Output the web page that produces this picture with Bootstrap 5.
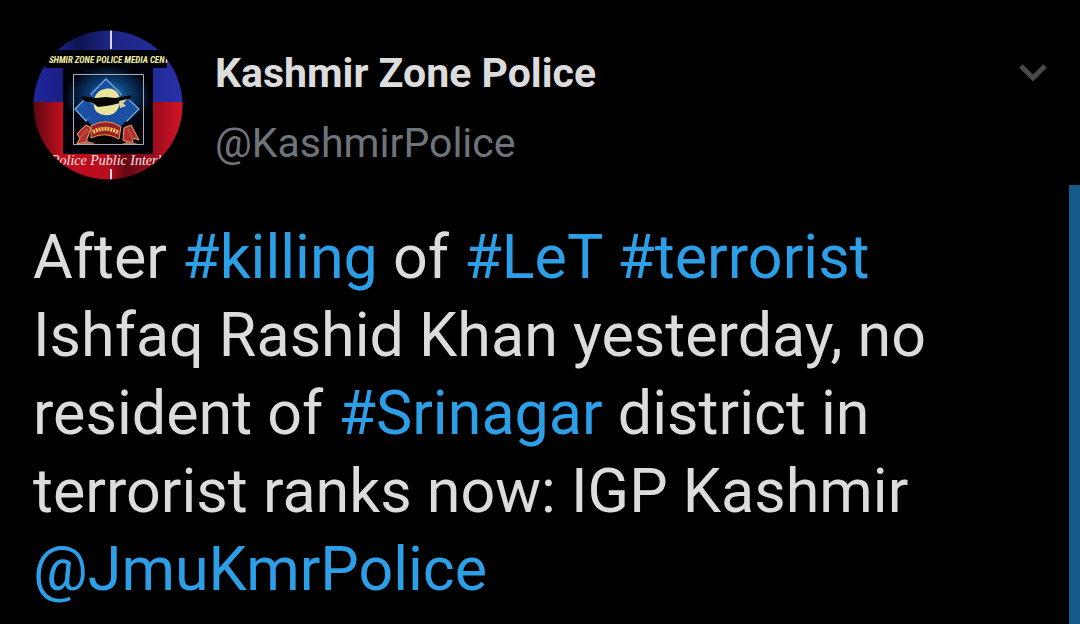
<!DOCTYPE html>
<html lang="en" data-bs-theme="dark">
<head>
<meta charset="utf-8">
<meta name="viewport" content="width=device-width, initial-scale=1">
<title>Kashmir Zone Police</title>
<link href="https://cdn.jsdelivr.net/npm/bootstrap@5.3.0/dist/css/bootstrap.min.css" rel="stylesheet">
<style>
  body { background: #000; color: #dcdcdc; font-family: Roboto, "Liberation Sans", sans-serif; }
  .post { padding: 30px 30px 16px 33px; }
  .avatar { width: 150px; height: 150px; }
  .author { margin-left: 32px; }
  .author h1, .author .handle { font-size: 41px; line-height: 70px; }
  .author h1, .author h1 a { color: #dcdcdc; }
  .author .handle { color: #6e7479; }
  .more { margin-top: 25px; color: #48484a; }
  .message { font-size: 61px; line-height: 78px; margin-top: 38px; }
  .message a { color: #2c9fe6; }
  .scroll-thumb { top: 185px; width: 11px; background: #145a88; }
</style>
</head>
<body>
<main class="position-relative min-vh-100">
  <article class="post">
    <header class="d-flex align-items-start">
      <svg class="avatar flex-shrink-0" viewBox="0 0 150 150" role="img" aria-label="Kashmir Zone Police emblem">
        <defs>
          <clipPath id="disc"><circle cx="75" cy="75" r="74.500"/></clipPath>
          <linearGradient id="sky" x1="0" x2="1"><stop offset="0" stop-color="#20259c"/><stop offset=".18" stop-color="#1b2088"/><stop offset=".3" stop-color="#0e1450"/><stop offset=".5" stop-color="#1b2580"/><stop offset="1" stop-color="#2730a8"/></linearGradient>
          <linearGradient id="ground" x1="0" x2="1"><stop offset="0" stop-color="#5b0610"/><stop offset=".2" stop-color="#c3101f"/><stop offset=".5" stop-color="#b90c1c"/><stop offset=".62" stop-color="#650812"/><stop offset="1" stop-color="#d41427"/></linearGradient>
          <radialGradient id="glow" cx=".5" cy=".4" r=".6"><stop offset="0" stop-color="#2f8cc8"/><stop offset=".5" stop-color="#0b3a70"/><stop offset="1" stop-color="#020512"/></radialGradient>
          <radialGradient id="halo"><stop offset=".5" stop-color="#0d3f85"/><stop offset="1" stop-color="#02030a"/></radialGradient>
        </defs>
        <g clip-path="url(#disc)">
          <path fill="url(#sky)" d="M0 0h150v72H0z"/>
          <path fill="url(#ground)" d="M0 72h150v78H0z"/>
          <path fill="#02030a" d="M12 20h122v18H12zM30 37h90v87H30z"/>
          <path fill="none" stroke="#d5d6ef" stroke-width="2" d="M78 0v19M78 139v11"/>
          <ellipse cx="75" cy="67" rx="43" ry="31" fill="url(#halo)"/>
          <path fill="url(#glow)" d="M42 45h68v51H42z"/>
          <path fill="#080405" d="M42 95h68v19H42z"/>
          <path fill="none" stroke="#a9adb0" d="M40.500 44.500h70v70h-70z"/>
          <path fill="#1a4fa4" stroke="#76aadc" stroke-width="1.300" d="M73 49l15 15-15 16-15-16zM53 68l12 11-12 12-11-12zM94 68l12 11-12 12-11-12z"/>
          <path fill="#1a4fa4" d="M59 64h28v16l7 10-7 7H60l-6-7 6-10z"/>
          <path fill="#e9e59b" d="M72 59c9-2 16 4 15 14-2 10-9 13-15 12-10-1-12-7-11-15 1-6 5-10 11-11z"/>
          <path fill="#060605" d="M48 66l15 2 10-1 9 1 17-3-2 4-10 4-8 2-6 1-8 1-5-4-9-2z"/>
          <path fill="#d8d2a0" d="M86 71l9-2-5 4 3 3-6 2z"/>
          <path fill="#95202a" stroke="#f09a42" d="M58 96q15-9 30 1l-2 12q-14-8-28-1z"/>
          <path fill="#b92b2d" stroke="#dbae75" d="M44 104l9-9 5 3-5 14-9 2 3-6zM91 98l7-3 8 15-6-2-1 6-9-4z"/>
          <path fill="none" stroke="#ffcc52" stroke-width="4" stroke-dasharray="2 1" d="M60 102q13-7 26 1"/>
          <path fill="none" stroke="#ac543b" stroke-width="2" d="M47 108l8-9M95 99l5 11"/>
          <path fill="#ac755d" d="M47 114l7-3 8 2-2 1zM89 114l7-3 9 3z"/>
          <text x="76" y="33" text-anchor="middle" fill="#f4f0a2" font-family="'Roboto Condensed', Roboto, sans-serif" font-size="9" font-weight="700" font-style="italic">SHMIR ZONE POLICE MEDIA CENT</text>
          <text x="18" y="135" fill="#f5e3e3" font-family="'Liberation Serif', serif" font-size="14" font-style="italic">Police Public Interl</text>
        </g>
      </svg>
      <div class="author flex-grow-1 pt-2">
        <h1 class="fw-bold mb-0"><a href="#profile" class="text-decoration-none">Kashmir Zone Police</a></h1>
        <a href="#profile" class="handle d-block text-decoration-none">@KashmirPolice</a>
      </div>
      <button type="button" class="more btn p-0 border-0 d-flex flex-shrink-0" aria-label="More options">
        <svg width="34" height="34" viewBox="0 0 34 34" fill="none" stroke="currentColor" stroke-width="5" aria-hidden="true"><path d="M5 11l12 12 12-12"/></svg>
      </button>
    </header>
    <p class="message mb-0">After <a href="#killing" class="text-decoration-none">#killing</a> of <a href="#let" class="text-decoration-none">#LeT</a> <a href="#terrorist" class="text-decoration-none">#terrorist</a> Ishfaq Rashid Khan yesterday, no resident of <a href="#srinagar" class="text-decoration-none">#Srinagar</a> district in terrorist ranks now: IGP Kashmir <a href="#jmukmrpolice" class="text-decoration-none">@JmuKmrPolice</a></p>
  </article>
  <div class="scroll-thumb position-absolute end-0 bottom-0" aria-hidden="true"></div>
</main>
<script src="https://cdn.jsdelivr.net/npm/bootstrap@5.3.0/dist/js/bootstrap.bundle.min.js"></script>
</body>
</html>
